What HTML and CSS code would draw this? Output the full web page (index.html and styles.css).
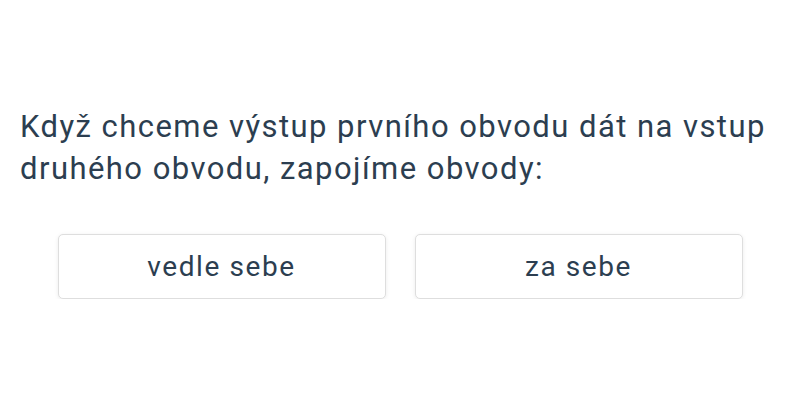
FILE: index.html
```html
<!DOCTYPE html>
<html lang="cs">
<head>
<meta charset="utf-8">
<link rel="stylesheet" href="styles.css">
</head>
<body>
<div class="quiz">
  <p class="question">Když chceme výstup prvního obvodu dát na vstup druhého obvodu, zapojíme obvody:</p>
  <div class="options">
    <button class="option">vedle sebe</button>
    <button class="option">za sebe</button>
  </div>
</div>
</body>
</html>
```
FILE: styles.css
```css
html, body {
  margin: 0;
  padding: 0;
  background: #fff;
}
body {
  font-family: Roboto, "Liberation Sans", sans-serif;
  color: #2c3e50;
}
.quiz {
  padding: 106px 20px 0 20px;
}
.question {
  margin: 0;
  font-size: 31px;
  line-height: 42px;
  letter-spacing: 1.45px;
}
.options {
  display: flex;
  justify-content: center;
  gap: 29px;
  margin-top: 44px;
}
.option {
  width: 328px;
  height: 65px;
  background: #fff;
  border: 1px solid #dedede;
  border-radius: 5px;
  box-shadow: 0 1px 4px rgba(0,0,0,0.08);
  font-family: Roboto, "Liberation Sans", sans-serif;
  font-size: 28px;
  letter-spacing: 1.6px;
  color: #2c3e50;
  padding: 0;
}
```
